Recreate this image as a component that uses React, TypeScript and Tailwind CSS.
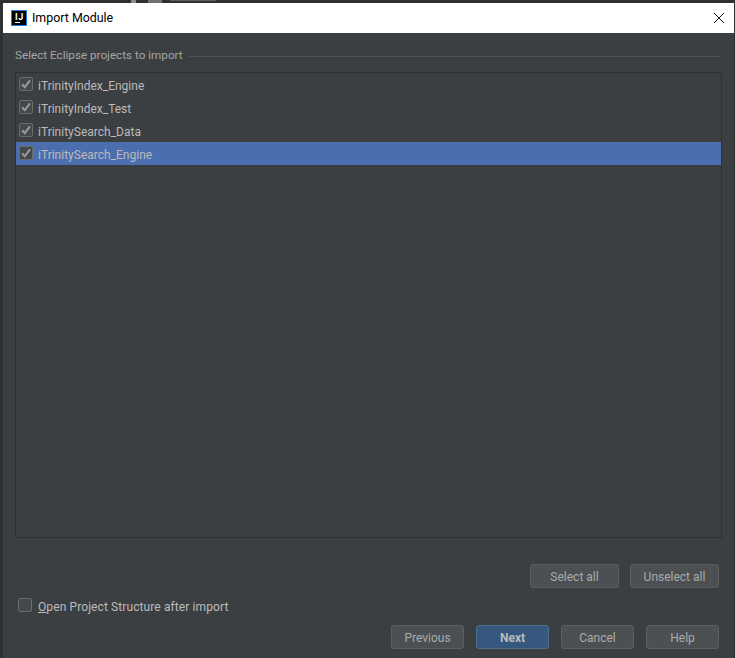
const font = "[font-family:Roboto,'Noto_Sans',sans-serif]";

const projects = [
  { name: "iTrinityIndex_Engine", selected: false },
  { name: "iTrinityIndex_Test", selected: false },
  { name: "iTrinitySearch_Data", selected: false },
  { name: "iTrinitySearch_Engine", selected: true },
];

function Checkbox({ checked }: { checked: boolean }) {
  return (
    <span className="flex h-[14px] w-[14px] shrink-0 items-center justify-center rounded-[2px] border border-[#6b6b6b] bg-[#43494a]">
      {checked && (
        <svg width="12" height="12" viewBox="0 0 12 12" fill="none">
          <path d="M2 6.2 L4.8 9.2 L10 2.4" stroke="#999999" strokeWidth="2" />
        </svg>
      )}
    </span>
  );
}

function Button({ label, width, primary }: { label: string; width: string; primary?: boolean }) {
  return (
    <button
      className={`${width} h-[24px] rounded-[3px] border pt-[1px] text-[12px] leading-[22px] ${
        primary
          ? "border-[#4c708c] bg-[#365880] font-bold text-[#bbbbbb]"
          : "border-[#5e6060] bg-[#4c5052] text-[#a9abac]"
      }`}
    >
      {label}
    </button>
  );
}

export default function App() {
  return (
    <div className={`${font} flex h-[658px] w-[735px] flex-col overflow-hidden bg-[#2e3032]`}>
      <div className="flex h-[3px] shrink-0 items-start">
        <div className="ml-[131px] h-[3px] w-[5px] bg-[#8a8d8f]" />
        <div className="ml-[12px] h-[3px] w-[14px] bg-[#6e7274]" />
        <div className="ml-[8px] h-[1px] w-[46px] bg-[#5c5f61]" />
      </div>
      <div className="ml-[3px] flex w-[731px] flex-1 flex-col">
        <div className="flex h-[30px] shrink-0 items-center bg-white pl-[8px] pr-[10px]">
          <div className="relative h-[16px] w-[16px] border border-[#1f7ce8] bg-black">
            <span className="absolute left-[3px] top-[2px] text-[9px] font-bold leading-[9px] tracking-[0.5px] text-white">IJ</span>
            <span className="absolute bottom-[2px] left-[3px] h-[1px] w-[5px] bg-white" />
          </div>
          <span className="ml-[5px] text-[12.4px] text-black">Import Module</span>
          <svg className="ml-auto" width="10" height="10" viewBox="0 0 10 10" fill="none">
            <path d="M0 0 L10 10 M10 0 L0 10" stroke="#111111" strokeWidth="1" />
          </svg>
        </div>

        <div className="flex flex-1 flex-col bg-[#3c3f41] pb-[9px] pl-[12px] pr-[12px] pt-[14px]">
          <div className="flex h-[18px] items-center pr-[3px]">
            <span className="text-[11.7px] text-[#a4a6a7]">Select Eclipse projects to import</span>
            <div className="ml-[6px] h-[1px] flex-1 bg-[#515355]" />
          </div>

          <div className="mt-[7px] h-[466px] border border-[#2f3133]">
            {projects.map((p) => (
              <div
                key={p.name}
                className={`flex h-[23px] items-start pl-[3px] pt-[4px] text-[12px] ${
                  p.selected ? "bg-[#4b6eaf] text-[#bbbbbb]" : "text-[#bbbbbb]"
                }`}
              >
                <Checkbox checked />
                <span className="ml-[5px] pt-[1px] leading-[16px]">{p.name}</span>
              </div>
            ))}
          </div>

          <div className="mt-[26px] flex justify-end gap-[11px] pr-[3px]">
            <Button label="Select all" width="w-[89px]" />
            <Button label="Unselect all" width="w-[89px]" />
          </div>

          <div className="mt-[10px] flex h-[14px] items-center pl-[3px] text-[12px] text-[#bbbbbb]">
            <Checkbox checked={false} />
            <span className="ml-[6px] pt-[3px] tracking-[0.1px]">
              <span className="underline">O</span>pen Project Structure after import
            </span>
          </div>

          <div className="mt-[13px] flex justify-end gap-[12px] pr-[3px]">
            <Button label="Previous" width="w-[73px]" />
            <Button label="Next" width="w-[73px]" primary />
            <Button label="Cancel" width="w-[73px]" />
            <Button label="Help" width="w-[73px]" />
          </div>
        </div>
      </div>
    </div>
  );
}
